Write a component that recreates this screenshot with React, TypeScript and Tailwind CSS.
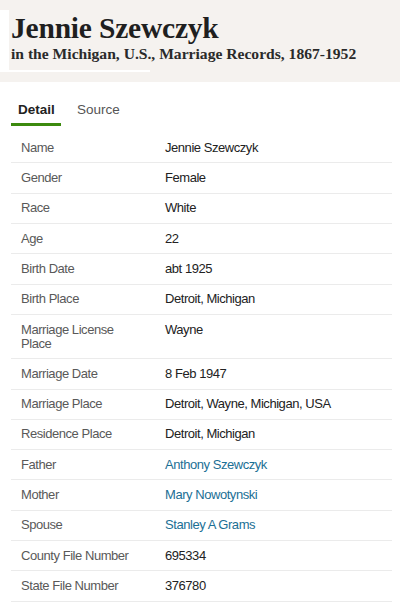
import React from "react";

type Row = { label: string; value: string; link?: boolean };

const rows: Row[] = [
  { label: "Name", value: "Jennie Szewczyk" },
  { label: "Gender", value: "Female" },
  { label: "Race", value: "White" },
  { label: "Age", value: "22" },
  { label: "Birth Date", value: "abt 1925" },
  { label: "Birth Place", value: "Detroit, Michigan" },
  { label: "Marriage License Place", value: "Wayne" },
  { label: "Marriage Date", value: "8 Feb 1947" },
  { label: "Marriage Place", value: "Detroit, Wayne, Michigan, USA" },
  { label: "Residence Place", value: "Detroit, Michigan" },
  { label: "Father", value: "Anthony Szewczyk", link: true },
  { label: "Mother", value: "Mary Nowotynski", link: true },
  { label: "Spouse", value: "Stanley A Grams", link: true },
  { label: "County File Number", value: "695334" },
  { label: "State File Number", value: "376780" },
];

export default function App() {
  return (
    <div className="w-[400px] h-[604px] overflow-hidden bg-white font-['Liberation_Sans',Arial,sans-serif]">
      <div className="relative h-[82px] bg-[#f5f2ef] pl-[11px] pt-[12px]">
        <div className="absolute left-0 top-[10px] w-[9px] h-[62px] bg-white" />
        <div className="absolute left-0 top-[70px] w-[150px] h-[2px] bg-white" />
        <h1 className="relative font-['Liberation_Serif',serif] font-bold text-[29.5px] leading-[32px] text-[#1f1f1f] tracking-[-0.2px]">
          Jennie Szewczyk
        </h1>
        <p className="relative font-['Liberation_Serif',serif] font-bold text-[15.6px] leading-[20px] text-[#2a2a2a]">
          in the Michigan, U.S., Marriage Records, 1867-1952
        </p>
      </div>
      <div className="flex pl-[11px] pt-[19px]">
        <div className="w-[50px] pl-[7px] border-b-[3px] border-[#3c8a0e] pb-[4px] text-[13.5px] leading-[18px] font-bold text-[#222]">
          Detail
        </div>
        <div className="ml-[16px] text-[13.5px] leading-[18px] text-[#555]">Source</div>
      </div>
      <div className="mx-[11px] mt-[7px] w-[381px]">
        {rows.map((r) => (
          <div
            key={r.label}
            className="flex border-b border-[#ebebeb] py-[7.67px] text-[13px] leading-[14px] tracking-[-0.45px]"
          >
            <div className="w-[154px] shrink-0 pl-[10px] pr-[30px] text-[#595959]">{r.label}</div>
            <div className={r.link ? "text-[#1b6f95]" : "text-[#222]"}>{r.value}</div>
          </div>
        ))}
      </div>
    </div>
  );
}
